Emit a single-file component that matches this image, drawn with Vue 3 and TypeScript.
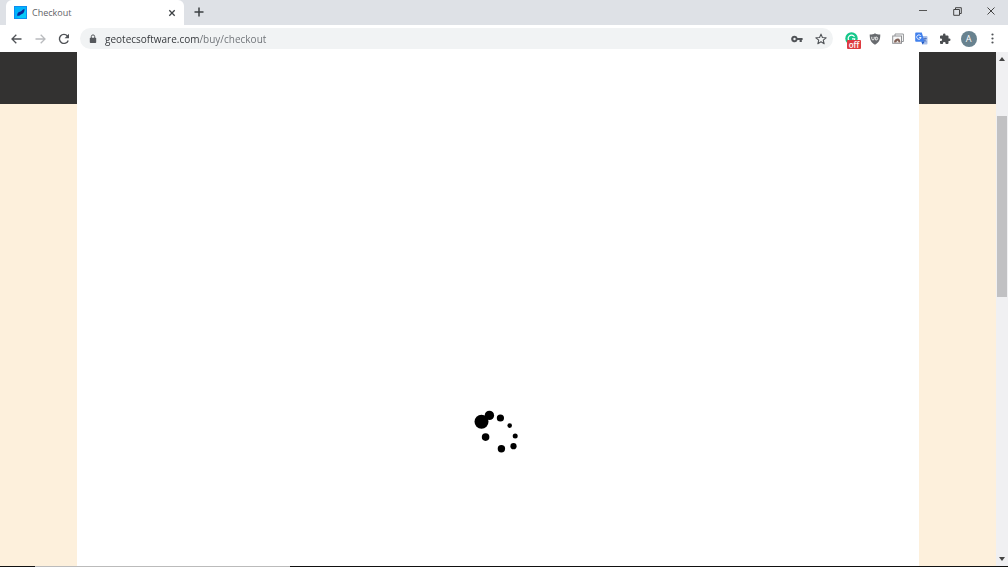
<script setup lang="ts">
import { ref } from 'vue'

interface Dot {
  x: number
  y: number
  r: number
}

const address = ref<string>('geotecsoftware.com/buy/checkout')

const dots: Dot[] = [
  { x: 7.5, y: 11.7, r: 7 },
  { x: 15.4, y: 5.4, r: 4.7 },
  { x: 26.4, y: 8, r: 3.6 },
  { x: 35.7, y: 15.6, r: 2.3 },
  { x: 41.2, y: 26.1, r: 2.5 },
  { x: 39.5, y: 36.2, r: 3.1 },
  { x: 27.4, y: 38.7, r: 3.7 },
  { x: 11.6, y: 27.1, r: 3.8 },
]
</script>

<template>
  <div class="browser">
    <header class="tabstrip">
      <div class="tab">
        <svg class="favicon" width="13" height="13" viewBox="0 0 13 13" aria-hidden="true">
          <rect width="13" height="13" fill="#0d8df0" />
          <rect x="1" y="1" width="11" height="11" fill="#00b4fb" />
          <path d="M12 3v9H3z" fill="#08c8f8" />
          <path d="M3 9.500c.5-3 1.500-3.500 3.500-4C8 5 8 3.500 10.500 3c0 2.500-.5 4-2.500 5S5 10.500 3 9.500z" fill="#0a2a9a" />
        </svg>
        <span class="tab-title">Checkout</span>
        <button class="icon-btn tab-close" aria-label="Close tab">
          <svg width="8" height="8" viewBox="0 0 8 8"><path d="M1.300 1.300l5.400 5.400M6.700 1.300L1.300 6.700" stroke="#3c4043" stroke-width="1.3" /></svg>
        </button>
      </div>
      <button class="icon-btn new-tab" aria-label="New tab">
        <svg width="10" height="10" viewBox="0 0 10 10"><path d="M5 0.5v9M0.5 5h9" stroke="#3c4043" stroke-width="1.5" /></svg>
      </button>
      <div class="window-controls">
        <button class="icon-btn" aria-label="Minimize">
          <svg width="8" height="8" viewBox="0 0 8 8"><path d="M0 3.500h8" stroke="#555" /></svg>
        </button>
        <button class="icon-btn" aria-label="Restore">
          <svg width="9" height="9" viewBox="0 0 9 9" fill="none" stroke="#444"><path d="M.7 2.5h5.8v5.8H.7zM2.5 2.5V.7h5.8v5.8H6.5" /></svg>
        </button>
        <button class="icon-btn" aria-label="Close window">
          <svg width="8" height="8" viewBox="0 0 8 8"><path d="M.5.5l7 7M7.5.5l-7 7" stroke="#444" /></svg>
        </button>
      </div>
    </header>

    <nav class="toolbar" aria-label="Browser toolbar">
      <div class="history">
        <button class="icon-btn" aria-label="Back">
          <svg width="11" height="10" viewBox="0 0 11 10" fill="none" stroke="#505357" stroke-width="1.3"><path d="M10.5 5H1.2M5.3.7L1 5l4.3 4.3" /></svg>
        </button>
        <button class="icon-btn" aria-label="Forward" disabled>
          <svg width="11" height="10" viewBox="0 0 11 10" fill="none" stroke="#b9bbbe" stroke-width="1.3"><path d="M.5 5h9.3M5.7.7L10 5 5.7 9.3" /></svg>
        </button>
        <button class="icon-btn" aria-label="Reload">
          <svg width="12" height="12" viewBox="0 0 12 12"><path d="M10.2 7.4A4.5 4.5 0 1 1 9.4 3" fill="none" stroke="#505357" stroke-width="1.4" /><path d="M11 .8v4.4H6.6z" fill="#505357" /></svg>
        </button>
      </div>

      <div class="omnibox">
        <svg width="8" height="10" viewBox="0 0 8 10" aria-hidden="true"><rect x=".8" y="3.7" width="6.4" height="5.3" rx=".7" fill="#55585c" /><path d="M2.3 4V2.6a1.7 1.7 0 0 1 3.4 0V4" fill="none" stroke="#55585c" stroke-width="1" /></svg>
        <input v-model="address" class="address" type="text" aria-label="Address" spellcheck="false" />
        <button class="icon-btn" aria-label="Saved passwords">
          <svg width="12" height="8" viewBox="0 0 12 8"><path fill="#505357" fill-rule="evenodd" d="M3.5.7a3.3 3.3 0 0 1 3.1 2.2h5v2.2h-.8v2H8.600v-2h-2A3.3 3.3 0 1 1 3.5.7zm0 2.1a1.2 1.2 0 1 0 0 2.4 1.2 1.2 0 0 0 0-2.4z" /></svg>
        </button>
        <button class="icon-btn" aria-label="Bookmark this page">
          <svg width="12" height="12" viewBox="0 0 11 11"><path d="M5.5 1l1.3 3.1 3.4.3-2.6 2.2.8 3.3-2.9-1.8-2.9 1.8.8-3.3L.8 4.4l3.4-.3z" fill="none" stroke="#505357" stroke-linejoin="round" /></svg>
        </button>
      </div>

      <div class="extensions">
        <button class="icon-btn grammar" aria-label="Writing assistant, off">
          <svg width="13" height="13" viewBox="0 0 13 13"><circle cx="6.5" cy="6.5" r="6.2" fill="#15c78a" /><path d="M9.500 4.800A3.400 3.400 0 1 0 9.800 7.500M10.300 6.800H7" fill="none" stroke="#fff" stroke-width="1.2" /></svg>
          <span class="badge">off</span>
        </button>
        <button class="icon-btn" aria-label="Content blocker">
          <svg width="12" height="12" viewBox="0 0 12 12"><path d="M6 .2C7.5 1.2 9 1.6 11.300 1.600c0 4.7-.9 7.800-5.300 10.100C1.6 9.4.700 6.300.700 1.600 3 1.6 4.5 1.2 6 .2z" fill="#686b6f" /><path d="M2.800 3.800v1.900a1.200 1.200 0 0 0 2.400 0V3.800M6.700 4v3h.5a1.500 1.500 0 0 0 0-3z" fill="none" stroke="#eee" stroke-width="1" /></svg>
        </button>
        <button class="icon-btn" aria-label="Image search">
          <svg width="12" height="12" viewBox="0 0 12 12" fill="none"><path d="M3 3V1h8.4v7.5H9.5" stroke="#949699" /><rect x=".7" y="3" width="8.8" height="7.3" fill="#f8f8f8" stroke="#909295" /><path d="M2 9.500c0-3 2-4 4-4 1.5 0 2 1.500 2.500 4z" fill="#806258" /><path d="M4 9.500L5.500 7.500 7 9.500z" fill="#eee" /></svg>
        </button>
        <button class="icon-btn" aria-label="Translate">
          <svg width="13" height="13" viewBox="0 0 13 13"><path d="M5 4h6.5a1 1 0 0 1 1 1v6.5a1 1 0 0 1-1 1H7.5z" fill="#a9bfe8" /><path d="M1 .5h5.8l2.8 9.3H1a.8.8 0 0 1-.8-.8V1.3A.8.8 0 0 1 1 .5z" fill="#4281ed" /><path d="M6.3 9.8h3.3l-2 2.6z" fill="#1c57c5" /><path d="M5.8 3.9a2.2 2.2 0 1 0 .3 1.6H4.2" fill="none" stroke="#fff" stroke-width=".9" /><path d="M8.5 6.5h3.3M10.2 5.7v.8c0 1.5-.6 2.5-1.5 3.2M9.2 7.5c.5 1 1.3 1.8 2.3 2.3" fill="none" stroke="#3f66b7" stroke-width=".7" /></svg>
        </button>
        <button class="icon-btn" aria-label="Extensions">
          <svg width="12" height="12" viewBox="0 0 24 24"><path d="M20.5 11H19V7a2 2 0 0 0-2-2h-4V3.5a2.5 2.5 0 0 0-5 0V5H4a2 2 0 0 0-2 2v3.8h1.5a2.7 2.7 0 0 1 0 5.4H2V20a2 2 0 0 0 2 2h3.8v-1.5a2.7 2.7 0 0 1 5.4 0V22H17a2 2 0 0 0 2-2v-4h1.5a2.5 2.5 0 0 0 0-5z" fill="#4b4e51" /></svg>
        </button>
        <button class="icon-btn" aria-label="Profile"><span class="avatar">A</span></button>
        <button class="icon-btn" aria-label="Browser menu">
          <svg width="3" height="11" viewBox="0 0 3 11" fill="#505357"><circle cx="1.5" cy="1.5" r="1.1" /><circle cx="1.5" cy="5.5" r="1.1" /><circle cx="1.5" cy="9.5" r="1.1" /></svg>
        </button>
      </div>
    </nav>

    <div class="viewport">
      <div class="page">
        <div class="page-header"></div>
        <main class="sheet" aria-busy="true">
          <svg class="loader" viewBox="0 0 44 44" role="img" aria-label="Loading">
            <circle v-for="(dot, i) in dots" :key="i" :cx="dot.x" :cy="dot.y" :r="dot.r" />
          </svg>
        </main>
      </div>
      <div class="scrollbar" aria-hidden="true">
        <svg class="arrow" viewBox="0 0 6 4"><path d="M0 4l3-4 3 4z" fill="#444" /></svg>
        <div class="track"><div class="thumb"></div></div>
        <svg class="arrow" viewBox="0 0 6 4"><path d="M0 0l3 4 3-4z" fill="#444" /></svg>
      </div>
    </div>
    <div class="taskbar-edge"><div class="taskbar-field"></div></div>
  </div>
</template>

<style>
body {
  margin: 0;
}
</style>

<style scoped>
.browser {
  display: flex;
  flex-direction: column;
  height: 100vh;
  overflow: hidden;
  background: #fff;
  font-family: "Open Sans", "Noto Sans", sans-serif;
}

.icon-btn {
  display: flex;
  align-items: center;
  justify-content: center;
  flex: none;
  width: 24px;
  height: 24px;
  padding: 0;
  border: 0;
  background: none;
  font: inherit;
}

.tabstrip {
  display: flex;
  flex: none;
  height: 25px;
  padding-left: 6px;
  background: #dee1e6;
}

.tab {
  display: flex;
  align-items: center;
  width: 178px;
  padding-left: 8px;
  box-sizing: border-box;
  border-radius: 6px 6px 0 0;
  background: #fff;
}

.tab-title {
  flex: 1;
  margin-left: 5px;
  color: #5f6368;
  font-size: 9px;
  line-height: 24px;
}

.new-tab {
  width: 30px;
}

.window-controls {
  display: flex;
  margin-left: auto;
}

.window-controls .icon-btn {
  width: 34px;
  height: 22px;
}

.toolbar {
  display: flex;
  flex: none;
  align-items: center;
  height: 27px;
  padding: 0 5px 0 4px;
}

.history {
  display: flex;
}

.omnibox {
  display: flex;
  flex: 1;
  align-items: center;
  height: 21px;
  margin: 0 7px 0 4px;
  padding-left: 9px;
  border-radius: 11px;
  background: #f1f3f4;
}

/* The host is darker than the path that follows it. */
.address {
  flex: 1;
  min-width: 0;
  height: 20px;
  margin-left: 8px;
  padding: 0;
  border: 0;
  outline: 0;
  color: transparent;
  background: linear-gradient(90deg, #303337 95px, #6b6f74 95px);
  background-clip: text;
  font: 10px/20px "Open Sans", "Noto Sans", sans-serif;
}

.extensions {
  display: flex;
  justify-content: space-between;
  width: 163px;
}

.extensions .icon-btn {
  width: 22px;
}

.grammar {
  position: relative;
}

.badge {
  position: absolute;
  top: 13px;
  left: 7px;
  width: 14px;
  border-radius: 1px;
  background: #dd3b40;
  color: #fff;
  font-size: 8px;
  font-weight: 600;
  line-height: 9px;
  text-align: center;
}

.avatar {
  width: 16px;
  border-radius: 50%;
  background: #68828f;
  color: #fff;
  font-size: 9px;
  line-height: 16px;
  text-align: center;
}

.viewport {
  display: flex;
  flex: 1;
  min-height: 0;
}

.page {
  display: grid;
  grid-template-rows: 52px 1fr;
  grid-template-columns: 77px 1fr 77px;
  flex: 1;
  background: #fdf0dc;
}

.page-header {
  grid-area: 1 / 1 / 2 / 4;
  background: #333231;
}

.sheet {
  grid-area: 1 / 2 / 3 / 3;
  display: flex;
  align-items: flex-start;
  justify-content: center;
  padding: 358px 4px 0 0;
  background: #fff;
}

.loader {
  width: 44px;
  height: 44px;
}

.scrollbar {
  display: flex;
  flex-direction: column;
  align-items: center;
  width: 12px;
  padding: 5px 0;
  box-sizing: border-box;
  background: #f0f0f2;
}

.arrow {
  flex: none;
  width: 6px;
  height: 4px;
}

.track {
  flex: 1;
  width: 10px;
  padding-top: 55px;
}

.thumb {
  height: 181px;
  background: #c1c1c3;
}

.taskbar-edge {
  flex: none;
  height: 1px;
  padding-left: 35px;
  background: #111;
}

.taskbar-field {
  width: 255px;
  height: 1px;
  background: #bbb;
}
</style>
